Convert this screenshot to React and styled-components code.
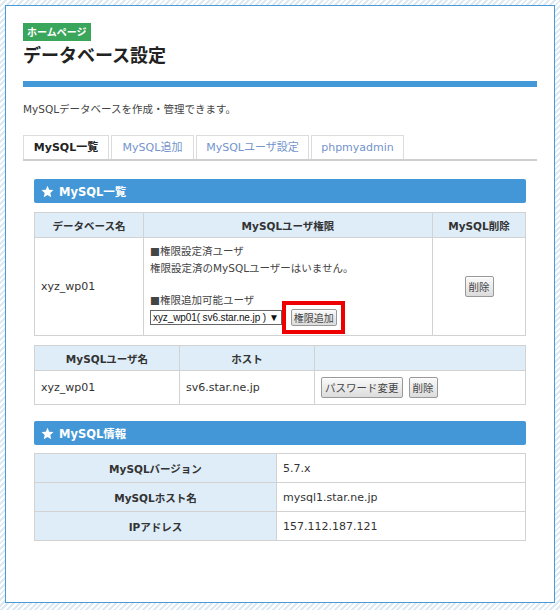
import React from 'react';
import styled, { createGlobalStyle } from 'styled-components';

const GlobalStyle = createGlobalStyle`
  html, body {
    margin: 0;
    padding: 0;
  }
  body {
    background: repeating-linear-gradient(
      -45deg,
      #ffffff 0px,
      #ffffff 2px,
      #dde9f3 2px,
      #dde9f3 4px
    );
    font-family: "DejaVu Sans", "Noto Sans CJK JP", sans-serif;
    font-size: 11px;
    color: #333;
  }
`;

const Page = styled.div`
  padding: 5px 5px 7px;
`;

const Panel = styled.div`
  background: #fff;
  border: 1px solid #4a9ad8;
  height: 598px;
  box-sizing: border-box;
  padding: 17px 17px;
`;

const Badge = styled.span`
  display: inline-block;
  background: #3aa65b;
  color: #fff;
  font-weight: bold;
  font-size: 10px;
  line-height: 18px;
  padding: 0 4px;
  font-family: "Noto Sans CJK JP", sans-serif;
`;

const Title = styled.h1`
  margin: 0;
  font-size: 18px;
  line-height: 26px;
  font-weight: bold;
  color: #222;
  font-family: "Noto Sans CJK JP", sans-serif;
`;

const TitleBar = styled.div`
  height: 6px;
  background: #4398d7;
  margin-top: 14px;
`;

const Lead = styled.p`
  margin: 15px 0 0;
  line-height: 14px;
  color: #444;
  font-size: 10.5px;
`;

const Tabs = styled.div`
  display: flex;
  gap: 2px;
  margin-top: 19px;
  border-bottom: 2px solid #cfcfcf;
`;

const Tab = styled.div`
  height: 24px;
  line-height: 24px;
  border: 1px solid #dcdcdc;
  border-bottom: none;
  font-size: 11px;
  white-space: nowrap;
  color: ${p => (p.$active ? '#222' : '#7394cc')};
  font-weight: ${p => (p.$active ? 'bold' : 'normal')};
  width: ${p => p.$w}px;
  box-sizing: border-box;
  text-align: center;
`;

const Content = styled.div`
  padding: 18px 11px 0;
`;

const SectionHead = styled.div`
  display: flex;
  align-items: center;
  gap: 5px;
  height: 24px;
  padding: 0 7px;
  background: #4397d7;
  border-radius: 2px;
  color: #fff;
  font-weight: bold;
  font-size: 11.5px;
  margin-top: ${p => p.$mt || 0}px;
`;

const Table = styled.table`
  width: 100%;
  border-collapse: collapse;
  margin-top: ${p => p.$mt || 0}px;
  table-layout: fixed;
`;

const Th = styled.th`
  background: #deedf8;
  border: 1px solid #d2d2d2;
  height: 24px;
  padding: 0 6px;
  font-weight: bold;
  color: #333;
  text-align: center;
  font-size: 10.5px;
`;

const Td = styled.td`
  border: 1px solid #d2d2d2;
  padding: 0 6px ${p => p.$pb || 0}px;
  height: ${p => p.$h || 28}px;
  text-align: ${p => p.$align || 'left'};
  color: #333;
  vertical-align: middle;
`;

const InfoTh = styled(Th)`
  height: 28px;
`;

const Line = styled.div`
  line-height: 17px;
  color: #444;
  font-size: 10.5px;
`;

const Spacer = styled.div`
  height: 15px;
`;

const AddRow = styled.div`
  display: flex;
  align-items: center;
  gap: 9px;
`;

const Select = styled.div`
  display: flex;
  align-items: center;
  gap: 3px;
  height: 13px;
  border: 1px solid #666;
  padding: 0 2px;
  font-family: "Liberation Sans", Arial, sans-serif;
  font-size: 10px;
  letter-spacing: -0.1px;
  color: #111;
  white-space: nowrap;
`;

const Marked = styled.div`
  position: relative;
  display: flex;
`;

const RedBox = styled.div`
  position: absolute;
  top: -8px;
  bottom: -8px;
  left: -9px;
  right: -8px;
  border: 4px solid #ee0000;
  pointer-events: none;
`;

const Button = styled.button`
  font-family: "Noto Sans CJK JP", sans-serif;
  font-size: ${p => p.$fs || 10.5}px;
  color: #444;
  height: ${p => p.$h || 21}px;
  padding: 0 ${p => p.$px || 3}px;
  border: 1px solid #999;
  border-radius: 2px;
  background: linear-gradient(#fafafa, #dcdcdc);
  box-shadow: inset 0 1px 0 #fff;
  cursor: pointer;
`;

const Buttons = styled.div`
  display: flex;
  gap: 6px;
`;

const Star = () => (
  <svg width="13" height="13" viewBox="0 0 24 24">
    <path
      fill="#fff"
      d="M12 1.5l3.2 7.1 7.8.8-5.8 5.3 1.7 7.7L12 18.5l-6.9 3.9 1.7-7.7L1 9.4l7.8-.8z"
    />
  </svg>
);

const tabs = [
  { label: 'MySQL一覧', w: 86, active: true },
  { label: 'MySQL追加', w: 83 },
  { label: 'MySQLユーザ設定', w: 113 },
  { label: 'phpmyadmin', w: 93 },
];

const info = [
  ['MySQLバージョン', '5.7.x'],
  ['MySQLホスト名', 'mysql1.star.ne.jp'],
  ['IPアドレス', '157.112.187.121'],
];

export default function App() {
  return (
    <Page>
      <GlobalStyle />
      <Panel>
        <Badge>ホームページ</Badge>
        <Title>データベース設定</Title>
        <TitleBar />
        <Lead>MySQLデータベースを作成・管理できます。</Lead>

        <Tabs>
          {tabs.map(t => (
            <Tab key={t.label} $active={t.active} $w={t.w}>
              {t.label}
            </Tab>
          ))}
        </Tabs>

        <Content>
          <SectionHead>
            <Star />
            MySQL一覧
          </SectionHead>

          <Table $mt={9}>
            <colgroup>
              <col style={{ width: 109 }} />
              <col style={{ width: 289 }} />
              <col />
            </colgroup>
            <thead>
              <tr>
                <Th>データベース名</Th>
                <Th>MySQLユーザ権限</Th>
                <Th>MySQL削除</Th>
              </tr>
            </thead>
            <tbody>
              <tr>
                <Td $h={97}>xyz_wp01</Td>
                <Td $pb={4}>
                  <Line>■権限設定済ユーザ</Line>
                  <Line>権限設定済のMySQLユーザーはいません。</Line>
                  <Spacer />
                  <Line>■権限追加可能ユーザ</Line>
                  <AddRow>
                    <Select>
                      xyz_wp01( sv6.star.ne.jp )<span>▼</span>
                    </Select>
                    <Marked>
                      <Button $h={17} $fs={10} $px={2}>権限追加</Button>
                      <RedBox />
                    </Marked>
                  </AddRow>
                </Td>
                <Td $align="center">
                  <Button>削除</Button>
                </Td>
              </tr>
            </tbody>
          </Table>

          <Table $mt={9}>
            <colgroup>
              <col style={{ width: 145 }} />
              <col style={{ width: 135 }} />
              <col />
            </colgroup>
            <thead>
              <tr>
                <Th>MySQLユーザ名</Th>
                <Th>ホスト</Th>
                <Th />
              </tr>
            </thead>
            <tbody>
              <tr>
                <Td $h={33}>xyz_wp01</Td>
                <Td>sv6.star.ne.jp</Td>
                <Td>
                  <Buttons>
                    <Button>パスワード変更</Button>
                    <Button>削除</Button>
                  </Buttons>
                </Td>
              </tr>
            </tbody>
          </Table>

          <SectionHead $mt={16}>
            <Star />
            MySQL情報
          </SectionHead>

          <Table $mt={8}>
            <colgroup>
              <col style={{ width: 242 }} />
              <col />
            </colgroup>
            <tbody>
              {info.map(([k, v]) => (
                <tr key={k}>
                  <InfoTh>{k}</InfoTh>
                  <Td $h={28}>{v}</Td>
                </tr>
              ))}
            </tbody>
          </Table>
        </Content>
      </Panel>
    </Page>
  );
}
